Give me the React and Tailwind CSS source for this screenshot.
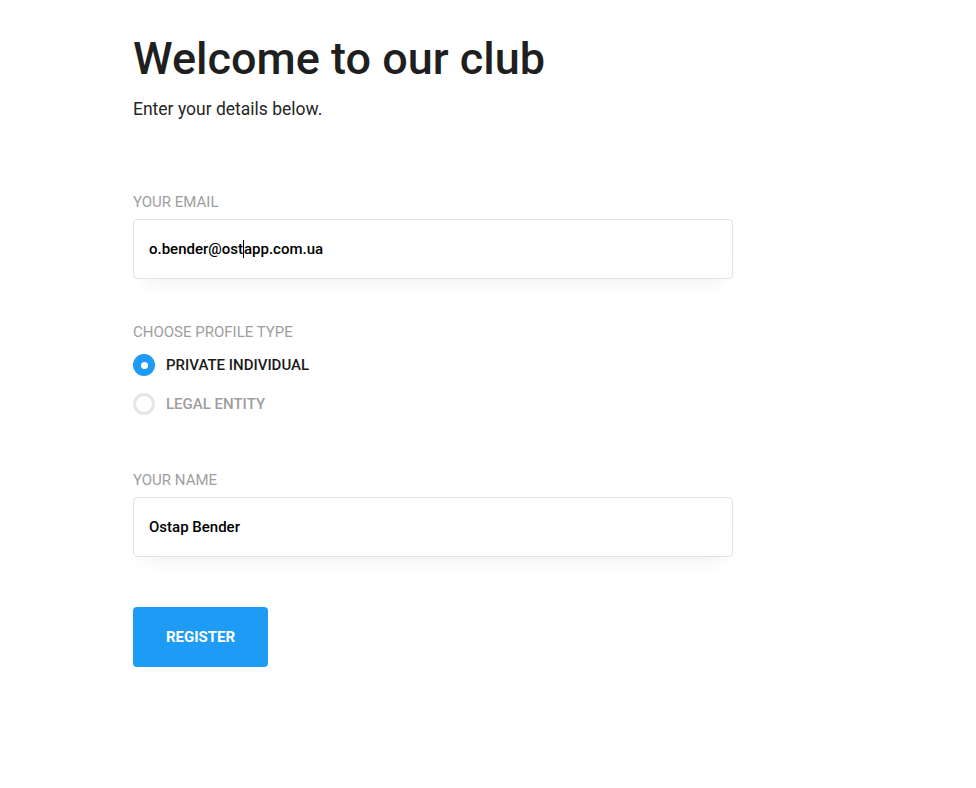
import React, { useState } from 'react';

const font = { fontFamily: 'Roboto, "Noto Sans", sans-serif' };

const Field = ({ label, value, caretAt }) => (
  <div>
    <label className="block text-[15px] leading-[18px] text-[#9e9e9e] uppercase">{label}</label>
    <div className="mt-[8px] h-[60px] w-[600px] rounded-[4px] border border-[#e3e3e3] bg-white px-[15px] flex items-center shadow-[0_14px_18px_-10px_rgba(0,0,0,0.06)]">
      <span className="text-[15px] font-medium text-black">
        {caretAt ? (
          <>
            {value.slice(0, caretAt)}
            <span className="inline-block w-px h-[18px] bg-black align-middle -mt-[2px]" />
            {value.slice(caretAt)}
          </>
        ) : (
          value
        )}
      </span>
    </div>
  </div>
);

const Radio = ({ label, checked, onClick }) => (
  <button onClick={onClick} className="flex items-center gap-[11px] h-[22px]">
    {checked ? (
      <span className="w-[22px] h-[22px] rounded-full bg-[#1e9bf5] flex items-center justify-center">
        <span className="w-[7px] h-[7px] rounded-full bg-white" />
      </span>
    ) : (
      <span className="w-[22px] h-[22px] rounded-full border-[3px] border-[#e6e6e6]" />
    )}
    <span className={'text-[15px] font-medium uppercase ' + (checked ? 'text-[#1a1a1a]' : 'text-[#9e9e9e]')}>
      {label}
    </span>
  </button>
);

export default function App() {
  const [type, setType] = useState('private');

  return (
    <div className="min-h-screen bg-white" style={font}>
      <div className="pl-[133px] pt-[35px]">
        {/* Heading */}
        <h1 className="text-[45px] leading-[48px] font-medium text-[#1f1f1f]">Welcome to our club</h1>
        <p className="mt-[14px] text-[17.5px] leading-6 text-[#262626]">Enter your details below.</p>

        {/* Email */}
        <div className="mt-[72px]">
          <Field label="Your email" value="o.bender@ostapp.com.ua" caretAt={12} />
        </div>

        {/* Profile type */}
        <div className="mt-[44px]">
          <div className="text-[15px] leading-[18px] text-[#9e9e9e] uppercase">Choose profile type</div>
          <div className="mt-[13px] flex flex-col gap-[17px] items-start">
            <Radio label="Private individual" checked={type === 'private'} onClick={() => setType('private')} />
            <Radio label="Legal entity" checked={type === 'legal'} onClick={() => setType('legal')} />
          </div>
        </div>

        {/* Name */}
        <div className="mt-[56px]">
          <Field label="Your name" value="Ostap Bender" />
        </div>

        <button className="mt-[50px] h-[60px] w-[135px] rounded-[4px] bg-[#1e9bf5] text-white text-[15px] font-bold uppercase">
          Register
        </button>
      </div>
    </div>
  );
}
